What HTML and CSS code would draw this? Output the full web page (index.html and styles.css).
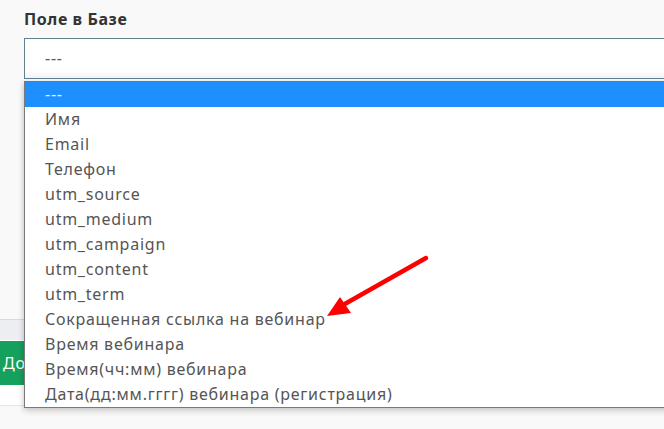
FILE: index.html
```html
<!DOCTYPE html>
<html lang="ru">
<head>
<meta charset="utf-8">
<link rel="stylesheet" href="styles.css">
</head>
<body>
<div class="page">
  <div class="form">
    <div class="field">
      <label class="label">Поле в Базе</label>
      <div class="select-wrap">
        <div class="select">---</div>
        <ul class="dropdown">
          <li class="opt active">---</li>
          <li class="opt">Имя</li>
          <li class="opt">Email</li>
          <li class="opt">Телефон</li>
          <li class="opt">utm_source</li>
          <li class="opt">utm_medium</li>
          <li class="opt">utm_campaign</li>
          <li class="opt">utm_content</li>
          <li class="opt">utm_term</li>
          <li class="opt">Сокращенная ссылка на вебинар</li>
          <li class="opt">Время вебинара</li>
          <li class="opt">Время(чч:мм) вебинара</li>
          <li class="opt">Дата(дд:мм.гггг) вебинара (регистрация)</li>
        </ul>
      </div>
    </div>
    <div class="spacer"></div>
  </div>
  <div class="footer">
    <div class="footer-band"></div>
    <div class="footer-actions">
      <button class="btn-green">До</button>
    </div>
  </div>
</div>
<svg class="arrow" width="664" height="429" viewBox="0 0 664 429">
  <line x1="426" y1="258" x2="343" y2="305" stroke="#ff0000" stroke-width="4.5" stroke-linecap="round"/>
  <polygon points="327,316 340,297 351,313" fill="#ff0000"/>
</svg>
</body>
</html>
```
FILE: styles.css
```css
html, body {
  margin: 0;
  padding: 0;
}
body {
  width: 664px;
  height: 429px;
  overflow: hidden;
  background: #f9f9fa;
  font-family: "Noto Sans", "Open Sans", sans-serif;
  position: relative;
}
.page {
  display: flex;
  flex-direction: column;
}
.form {
  padding: 8px 0 0 24px;
}
.field {
  display: flex;
  flex-direction: column;
}
.label {
  font-size: 16px;
  font-weight: 700;
  color: #333;
  line-height: 22px;
  letter-spacing: 0.6px;
  margin-bottom: 8px;
}
.select-wrap {
  position: relative;
  width: 700px;
}
.select {
  height: 41px;
  box-sizing: border-box;
  border: 1px solid #62808f;
  background: linear-gradient(#ffffff 80%, #f5f2f6);
  padding: 0 20px;
  font-size: 16px;
  line-height: 39px;
  letter-spacing: 0.75px;
  color: #555;
}
.dropdown {
  position: absolute;
  top: 43px;
  left: 0;
  right: 0;
  margin: 0;
  padding: 0;
  list-style: none;
  background: #fff;
  border: 1px solid #7a7a7a;
  border-top-color: #5e7d8c;
  box-shadow: 0 3px 6px rgba(0,0,0,0.18), -2px 0 4px rgba(0,0,0,0.05);
  z-index: 5;
}
.opt {
  height: 25px;
  line-height: 25px;
  padding: 0 20px;
  font-size: 16px;
  letter-spacing: 0.75px;
  color: #555;
  white-space: nowrap;
}
.opt.active {
  background: #1e8fff;
  color: #eaf4ff;
}
.spacer {
  height: 240px;
}
.footer {
  display: flex;
  flex-direction: column;
}
.footer-band {
  height: 20px;
  border-top: 1px solid #d6d9de;
  background: #eceef1;
}
.footer-actions {
  padding: 1px 0 20px 0;
  background: #fff;
  border-bottom: 1px solid #e4e6e9;
}
.btn-green {
  width: 40px;
  height: 44px;
  border: none;
  background: #16a05d;
  color: #fff;
  font-family: inherit;
  font-size: 16px;
  letter-spacing: 0.75px;
  padding: 0 0 0 3px;
  text-align: left;
}
.arrow {
  position: absolute;
  left: 0;
  top: 0;
  z-index: 10;
  pointer-events: none;
}
```
